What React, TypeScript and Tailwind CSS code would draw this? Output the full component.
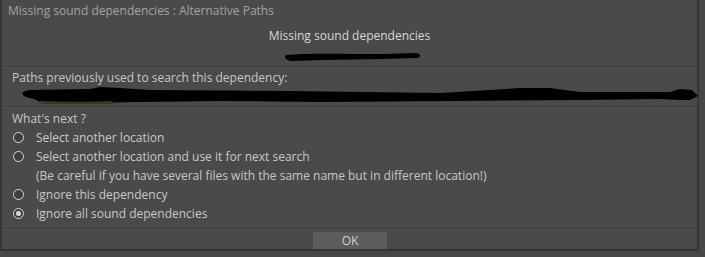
import { useState } from "react";

const options = [
  { id: "select", label: "Select another location" },
  {
    id: "select-next",
    label: "Select another location and use it for next search",
    note: "(Be careful if you have several files with the same name but in different location!)",
  },
  { id: "ignore", label: "Ignore this dependency" },
  { id: "ignore-all", label: "Ignore all sound dependencies" },
];

function Radio({ checked }: { checked: boolean }) {
  return (
    <span className="flex h-[11px] w-[11px] items-center justify-center rounded-full border-[1.5px] border-[#d8d8d8] bg-[#3e3e3e]">
      {checked && <span className="h-[5px] w-[5px] rounded-full bg-[#d8d8d8]" />}
    </span>
  );
}

export default function App() {
  const [choice, setChoice] = useState("ignore-all");

  return (
    <div
      className="h-[257px] w-[705px] bg-[#474747] text-[12px] leading-[19px] text-[#c8c8c8]"
      style={{ fontFamily: '"Open Sans", "Noto Sans", sans-serif' }}
    >
      <div className="flex h-[251px] w-[699px] flex-col border-x-2 border-b-2 border-[#343434] bg-[#4a4a4a]">
        <div className="pl-[6px] pt-[1px] text-[#a2a2a2]">Missing sound dependencies : Alternative Paths</div>

        <div className="flex flex-col items-center pt-[6px]">
          <div className="text-[#d6d6d6]">Missing sound dependencies</div>
          <svg width="140" height="10" viewBox="0 0 140 10" className="mt-[7px] ml-[6px]">
            <path d="M4 3 C20 1 60 2 100 2 L132 1 C138 1 139 5 134 6 L100 7 L40 8 L8 9 C2 8 0 4 4 3 Z" fill="#000" />
          </svg>
        </div>

        <div className="mt-[4px] h-px bg-[#3a3a3a]" />
        <div className="h-px bg-[#565656]" />

        <div className="pl-[10px]">Paths previously used to search this dependency:</div>
        <svg width="680" height="18" viewBox="0 1 680 18" className="ml-[18px]">
          <path d="M10 4 L70 3 L80 1 L100 2 L130 4 L270 5 L420 7 L500 2 L530 2 L560 6 L650 6 L660 3 L672 4 L678 10 L670 14 L660 14 L640 13 L560 14 L430 15 L300 16 L200 15 L120 16 L60 17 L20 16 L14 13 L6 11 C0 8 2 5 10 4 Z" fill="#000" />
          <path d="M20 15 L60 16 L92 15 L94 18 L22 18 Z" fill="#3d3a10" />
        </svg>

        <div className="mt-[1px] h-px bg-[#3a3a3a]" />
        <div className="h-px bg-[#565656]" />

        <div className="pl-[10px] pt-[1px]">What's next ?</div>
        <div className="flex flex-1 flex-col">
          {options.map((o) => (
            <div key={o.id}>
              <button
                type="button"
                onClick={() => setChoice(o.id)}
                className="flex items-center gap-[12px] pl-[11px] text-left"
              >
                <Radio checked={choice === o.id} />
                <span>{o.label}</span>
              </button>
              {o.note && <div className="pl-[34px]">{o.note}</div>}
            </div>
          ))}
        </div>

        <div className="h-px bg-[#3c3c3c]" />
        <div className="h-px bg-[#555555]" />
        <div className="flex justify-center pt-[2px]">
          <button type="button" className="ml-[1px] h-[17px] w-[74px] bg-[#5c5c5c] text-[12px] leading-[17px] text-[#d0d0d0]">
            OK
          </button>
        </div>
      </div>
    </div>
  );
}
